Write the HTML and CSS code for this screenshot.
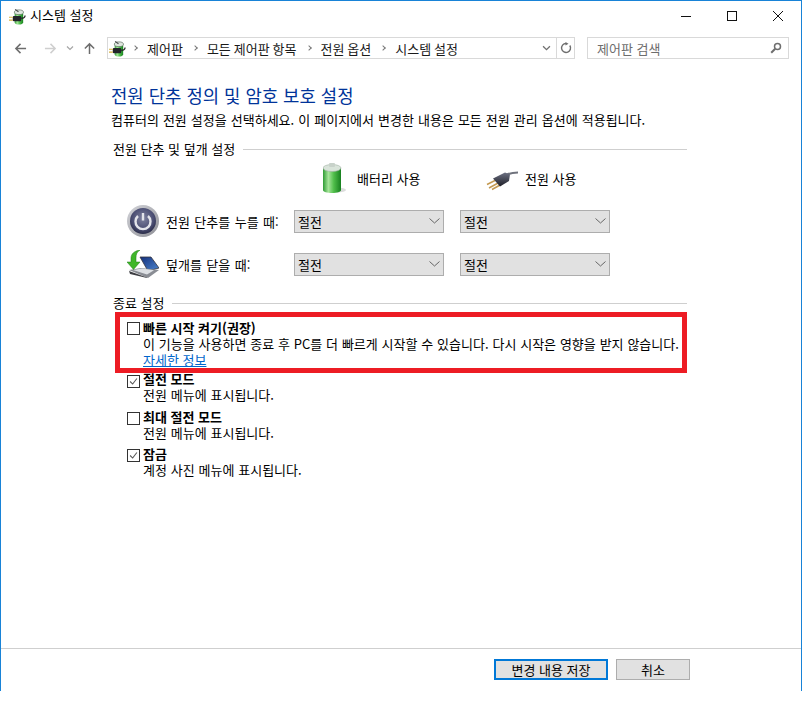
FILE: index.html
```html
<!DOCTYPE html>
<html lang="ko">
<head>
<meta charset="utf-8">
<title>시스템 설정</title>
<link rel="stylesheet" href="styles.css">
</head>
<body>
<svg class="defs" width="0" height="0" aria-hidden="true">
  <defs>
    <linearGradient id="gBat" x1="0" x2="1" y1="0" y2="0">
      <stop offset="0" stop-color="#2f9c34"/><stop offset=".3" stop-color="#a6e59a"/><stop offset=".6" stop-color="#4fbe4a"/><stop offset="1" stop-color="#17801f"/>
    </linearGradient>
    <radialGradient id="gPow" cx=".5" cy=".4" r=".6">
      <stop offset="0" stop-color="#7f829f"/><stop offset=".7" stop-color="#4a4d72"/><stop offset="1" stop-color="#2a2c48"/>
    </radialGradient>
    <linearGradient id="gRing" x1="0" x2="1" y1="0" y2="1">
      <stop offset="0" stop-color="#d4d5da"/><stop offset="1" stop-color="#8e8f96"/>
    </linearGradient>
    <linearGradient id="gScreen" x1="0" x2="1" y1="0" y2="1">
      <stop offset="0" stop-color="#14307c"/><stop offset="1" stop-color="#4e86cf"/>
    </linearGradient>
    <linearGradient id="gPlug" x1="0" x2="0" y1="0" y2="1">
      <stop offset="0" stop-color="#6d7183"/><stop offset="1" stop-color="#1d1e27"/>
    </linearGradient>
    <symbol id="cpl" viewBox="0 0 18 18">
      <path d="M6 4v11c0 1.500 2 2.500 4.500 2.500S15 16.500 15 15V4z" fill="url(#gBat)"/>
      <ellipse cx="10.500" cy="4.500" rx="4.800" ry="2.500" fill="#dfe6df" stroke="#5a6b5c" stroke-width=".7"/>
      <path d="M6.500 1.500 10 4" stroke="#444" stroke-width="1.100" fill="none"/>
      <path d="M13 11c2.500 0 4-1 4-3" stroke="#222" stroke-width="1.300" fill="none"/>
      <rect x="4" y="8.500" width="9" height="5.500" rx="1.300" fill="#23242a"/>
      <path d="M0 9.800h4M0 12.800h4" stroke="#d7b23c" stroke-width="1.300"/>
    </symbol>
  </defs>
</svg>

<div class="window">
  <header class="titlebar">
    <svg class="title-icon"><use href="#cpl"/></svg>
    <span class="title-text">시스템 설정</span>
    <div class="caption">
      <svg class="cap" viewBox="0 0 46 30"><path d="M18 15.500h10" stroke="#111" fill="none"/></svg>
      <svg class="cap" viewBox="0 0 46 30"><rect x="18.500" y="10.500" width="9" height="9" stroke="#111" fill="none"/></svg>
      <svg class="cap" viewBox="0 0 46 30"><path d="M18 10l10 10M28 10l-10 10" stroke="#111" fill="none"/></svg>
    </div>
  </header>

  <nav class="toolbar">
    <div class="navs">
      <svg class="nav nav-back" viewBox="0 0 14 14"><path d="M13 7H2M7 2 2 7l5 5" stroke="#6d6d6d" stroke-width="1.600" fill="none"/></svg>
      <svg class="nav nav-fwd" viewBox="0 0 14 14"><path d="M1 7h11M7 2l5 5-5 5" stroke="#cfcfcf" stroke-width="1.600" fill="none"/></svg>
      <svg class="nav-drop" viewBox="0 0 8 6"><path d="M1 1.500 4 4.500 7 1.500" stroke="#a5a5a5" stroke-width="1.200" fill="none"/></svg>
      <svg class="nav nav-up" viewBox="0 0 14 14"><path d="M7 13V2M2 7l5-5 5 5" stroke="#6d6d6d" stroke-width="1.600" fill="none"/></svg>
    </div>
    <div class="address">
      <svg class="addr-icon"><use href="#cpl"/></svg>
      <span class="crumb-sep"></span><span class="crumb">제어판</span>
      <span class="crumb-sep"></span><span class="crumb">모든 제어판 항목</span>
      <span class="crumb-sep"></span><span class="crumb">전원 옵션</span>
      <span class="crumb-sep"></span><span class="crumb">시스템 설정</span>
      <svg class="addr-drop" viewBox="0 0 10 7"><path d="M1 1.500 5 5.500 9 1.500" stroke="#707070" stroke-width="1.500" fill="none"/></svg>
      <span class="addr-refresh">
        <svg viewBox="0 0 12 12" width="12" height="12"><path d="M9.800 3.500A4.500 4.500 0 1 1 6 1.500" stroke="#6e6e6e" stroke-width="1.400" fill="none"/><path d="M5.500 0v3.500L8.500 1.700z" fill="#6e6e6e"/></svg>
      </span>
    </div>
    <div class="search">
      <span class="search-text">제어판 검색</span>
      <svg class="search-icon" viewBox="0 0 12 12"><circle cx="7.500" cy="4.500" r="3" stroke="#6e6e6e" stroke-width="1.500" fill="none"/><path d="M5.200 6.800 1.200 10.800" stroke="#6e6e6e" stroke-width="2" fill="none"/></svg>
    </div>
  </nav>

  <main class="content">
    <h1 class="heading">전원 단추 정의 및 암호 보호 설정</h1>
    <p class="intro">컴퓨터의 전원 설정을 선택하세요. 이 페이지에서 변경한 내용은 모든 전원 관리 옵션에 적용됩니다.</p>

    <div class="group-title group-first"><span>전원 단추 및 덮개 설정</span><i></i></div>

    <div class="col-heads">
      <div class="col-head col-battery">
        <svg class="bat-icon" viewBox="0 0 26 32">
          <ellipse cx="14" cy="28" rx="9" ry="2.500" fill="#dcdcdc"/>
          <path d="M0 6v22c0 2 4 3 9 3s9-1 9-3V6z" fill="url(#gBat)"/>
          <ellipse cx="9" cy="6" rx="9" ry="3.500" fill="#d9e4da" stroke="#9fb0a2" stroke-width=".6"/>
          <rect x="6" y="1" width="6" height="4" rx="1" fill="#c8d2ca"/>
        </svg>
        <span>배터리 사용</span>
      </div>
      <div class="col-head col-plug">
        <svg class="plug-icon" viewBox="0 0 32 22">
          <path d="M20 5c4-2 8-2.500 12-2.500" stroke="#6f727c" stroke-width="2.200" fill="none"/>
          <path d="M1 14.500l9-4.500M3 18l10-5.500M6 19.500l9-5" stroke="#c49a52" stroke-width="1.500" fill="none"/>
          <path d="M7 8.500 19 2.500l5 2-1 6.500-9 5.500z" fill="url(#gPlug)"/>
        </svg>
        <span>전원 사용</span>
      </div>
    </div>

    <div class="row row-power">
      <svg class="row-icon icon-power" viewBox="0 0 32 32">
        <circle cx="16" cy="16" r="16" fill="url(#gRing)"/>
        <circle cx="16" cy="16" r="13" fill="url(#gPow)"/>
        <path d="M11 11a7.500 7.500 0 1 0 10 0" stroke="#e3e4ea" stroke-width="2.400" fill="none"/>
        <path d="M16 8v7.500" stroke="#e3e4ea" stroke-width="2.400" fill="none"/>
      </svg>
      <span class="row-label">전원 단추를 누를 때:</span>
      <div class="select"><span>절전</span><svg viewBox="0 0 11 6"><path d="M.5.500 5.500 5 10.500.5" stroke="#666" fill="none"/></svg></div>
      <div class="select"><span>절전</span><svg viewBox="0 0 11 6"><path d="M.5.500 5.500 5 10.500.5" stroke="#666" fill="none"/></svg></div>
    </div>
    <div class="row row-lid">
      <svg class="row-icon icon-lid" viewBox="0 0 32 28">
        <path d="M13 7h11l8 11-11 3z" fill="url(#gScreen)" stroke="#33343c" stroke-width=".8"/>
        <path d="M2 20l12-2 18 2-11 8z" fill="#8a8d94"/>
        <path d="M6 20l9-1.500 12 1.700-7 4.300z" fill="#dde0e4"/>
        <path d="M2 21l18 6.500v.5L3 24z" fill="#3e3f44"/>
        <path d="M4 12V8c0-4 3-7 9-8-3 2-4 4-4 8v4h4l-6.500 7.500L0 12z" fill="#3fb629" stroke="#1f7d18" stroke-width=".5"/>
      </svg>
      <span class="row-label">덮개를 닫을 때:</span>
      <div class="select"><span>절전</span><svg viewBox="0 0 11 6"><path d="M.5.500 5.500 5 10.500.5" stroke="#666" fill="none"/></svg></div>
      <div class="select"><span>절전</span><svg viewBox="0 0 11 6"><path d="M.5.500 5.500 5 10.500.5" stroke="#666" fill="none"/></svg></div>
    </div>

    <div class="group-title group-second"><span>종료 설정</span><i></i></div>

    <div class="options">
      <div class="highlight"></div>
      <div class="option option-fast">
        <span class="check"></span>
        <div>
          <div class="opt-title">빠른 시작 켜기(권장)</div>
          <div class="opt-desc">이 기능을 사용하면 종료 후 PC를 더 빠르게 시작할 수 있습니다. 다시 시작은 영향을 받지 않습니다.</div>
          <a class="opt-link">자세한 정보</a>
        </div>
      </div>
      <div class="option option-sleep">
        <span class="check checked"><svg viewBox="0 0 13 13"><path d="M2.500 6.500 5.500 9.500 10.500 3" stroke="#5a5a5a" stroke-width="1.300" fill="none"/></svg></span>
        <div>
          <div class="opt-title">절전 모드</div>
          <div class="opt-desc">전원 메뉴에 표시됩니다.</div>
        </div>
      </div>
      <div class="option option-hibernate">
        <span class="check"></span>
        <div>
          <div class="opt-title">최대 절전 모드</div>
          <div class="opt-desc">전원 메뉴에 표시됩니다.</div>
        </div>
      </div>
      <div class="option option-lock">
        <span class="check checked"><svg viewBox="0 0 13 13"><path d="M2.500 6.500 5.500 9.500 10.500 3" stroke="#5a5a5a" stroke-width="1.300" fill="none"/></svg></span>
        <div>
          <div class="opt-title">잠금</div>
          <div class="opt-desc">계정 사진 메뉴에 표시됩니다.</div>
        </div>
      </div>
    </div>
  </main>

  <footer class="footer">
    <button class="btn btn-primary">변경 내용 저장</button>
    <button class="btn btn-cancel">취소</button>
  </footer>
</div>
</body>
</html>
```
FILE: styles.css
```css
* { box-sizing: border-box; }
html, body { margin: 0; padding: 0; background: #fff; }
body { font-family: "Noto Sans CJK KR", "Noto Sans", sans-serif; font-size: 13px; color: #000; width: 802px; height: 718px; overflow: hidden; }
.defs { position: absolute; }
.window { width: 802px; height: 691px; border: 1px solid #1883d7; border-bottom: 0; display: flex; flex-direction: column; }

.titlebar { height: 29px; display: flex; align-items: center; flex: none; padding-left: 8px; }
.title-icon { width: 17px; height: 17px; margin-top: 1px; }
.title-text { margin-left: 4px; font-size: 13px; line-height: 16px; margin-bottom: 2px; }
.caption { margin-left: auto; display: flex; }
.cap { width: 46px; height: 30px; display: block; }

.toolbar { height: 22px; margin-top: 7px; display: flex; align-items: stretch; flex: none; }
.navs { width: 106px; display: flex; align-items: center; padding-left: 13px; flex: none; }
.nav { width: 13px; height: 13px; }
.nav-fwd { margin-left: 17px; }
.nav-drop { width: 8px; height: 6px; margin-left: 9px; }
.nav-up { margin-left: 9px; }
.address { width: 468px; border: 1px solid #d9d9d9; display: flex; align-items: center; flex: none; white-space: nowrap; padding-left: 1px; }
.addr-icon { width: 17px; height: 17px; margin-right: -3px; }
.crumb-sep { width: 4px; height: 4px; border-top: 1.500px solid #777; border-right: 1.500px solid #777; transform: rotate(45deg); margin: 0 10px; flex: none; }
.crumb { font-size: 13px; color: #1a1a1a; word-spacing: -.7px; }
.addr-drop { width: 9px; height: 6px; margin-left: auto; margin-right: 5px; }
.addr-refresh { width: 18px; align-self: stretch; border-left: 1px solid #d9d9d9; display: flex; align-items: center; justify-content: center; }
.search { width: 202px; margin-left: 12px; border: 1px solid #d9d9d9; display: flex; align-items: center; padding: 0 6px 0 9px; flex: none; }
.search-text { color: #6d6d6d; font-size: 13px; }
.search-icon { width: 12px; height: 12px; margin-left: auto; }

.content { flex: 1; padding: 26px 0 0 110px; min-height: 0; }
.heading { margin: 0; font-size: 17.8px; font-weight: 400; line-height: 20px; color: #003399; }
.intro { margin: 6px 0 0; line-height: 18px; white-space: nowrap; word-spacing: .4px; }
.group-title { display: flex; align-items: center; width: 576px; padding-left: 2px; line-height: 16px; }
.group-title i { flex: 1; height: 1px; background: #cfcfcf; margin-left: 8px; }
.group-first { margin-top: 12px; }
.group-second { margin-top: 15px; }
.col-heads { height: 36px; display: flex; margin-top: 3px; }
.col-head { display: flex; align-items: center; flex: none; }
.col-battery { margin-left: 212px; width: 163px; }
.bat-icon { width: 26px; height: 32px; margin-right: 8px; }
.plug-icon { width: 32px; height: 22px; margin: 6px 7px 0 0; }
.row { display: flex; align-items: center; height: 32px; padding-left: 16px; }
.row-power { margin-top: 9px; }
.row-lid { margin-top: 11px; }
.row-icon { width: 32px; flex: none; }
.icon-power { height: 32px; margin-top: -1px; }
.icon-lid { height: 28px; margin-top: -1px; }
.row-label { width: 135px; padding-left: 7px; white-space: nowrap; flex: none; word-spacing: .8px; }
.select { width: 150px; height: 23px; background: #e1e1e1; border: 1px solid #adadad; display: flex; align-items: center; justify-content: space-between; padding: 0 3px 0 3px; margin-right: 16px; flex: none; }
.select svg { width: 11px; height: 6px; }

.options { position: relative; margin-top: 1px; padding-left: 16px; }
.highlight { position: absolute; left: 4px; top: 0; width: 572px; height: 61px; border: 5px solid #ed1c24; pointer-events: none; }
.option { display: flex; }
.option-fast { padding-top: 8px; }
.option-sleep { margin-top: 3px; }
.option-hibernate { margin-top: 6px; }
.option-lock { margin-top: 5px; }
.check { width: 13px; height: 13px; border: 1px solid #333; background: #fff; margin-top: 3px; margin-right: 3px; flex: none; display: block; }
.option-fast .check { margin-top: 2px; }
.option-sleep .check { margin-top: 4px; }
.check svg { display: block; width: 11px; height: 11px; }
.opt-title { font-weight: 700; line-height: 16px; }
.opt-desc { line-height: 16px; white-space: nowrap; word-spacing: .2px; }
.opt-link { color: #0066cc; text-decoration: underline; line-height: 16px; display: block; }

.footer { height: 43px; border-top: 1px solid #cfcfcf; display: flex; align-items: flex-start; padding: 10px 0 0 493px; flex: none; }
.btn { height: 21px; font-family: inherit; font-size: 13px; line-height: 1; background: #e1e1e1; color: #000; padding: 0; }
.btn-primary { width: 114px; border: 2px solid #0078d7; }
.btn-cancel { width: 74px; margin-left: 8px; border: 1px solid #adadad; }
```
